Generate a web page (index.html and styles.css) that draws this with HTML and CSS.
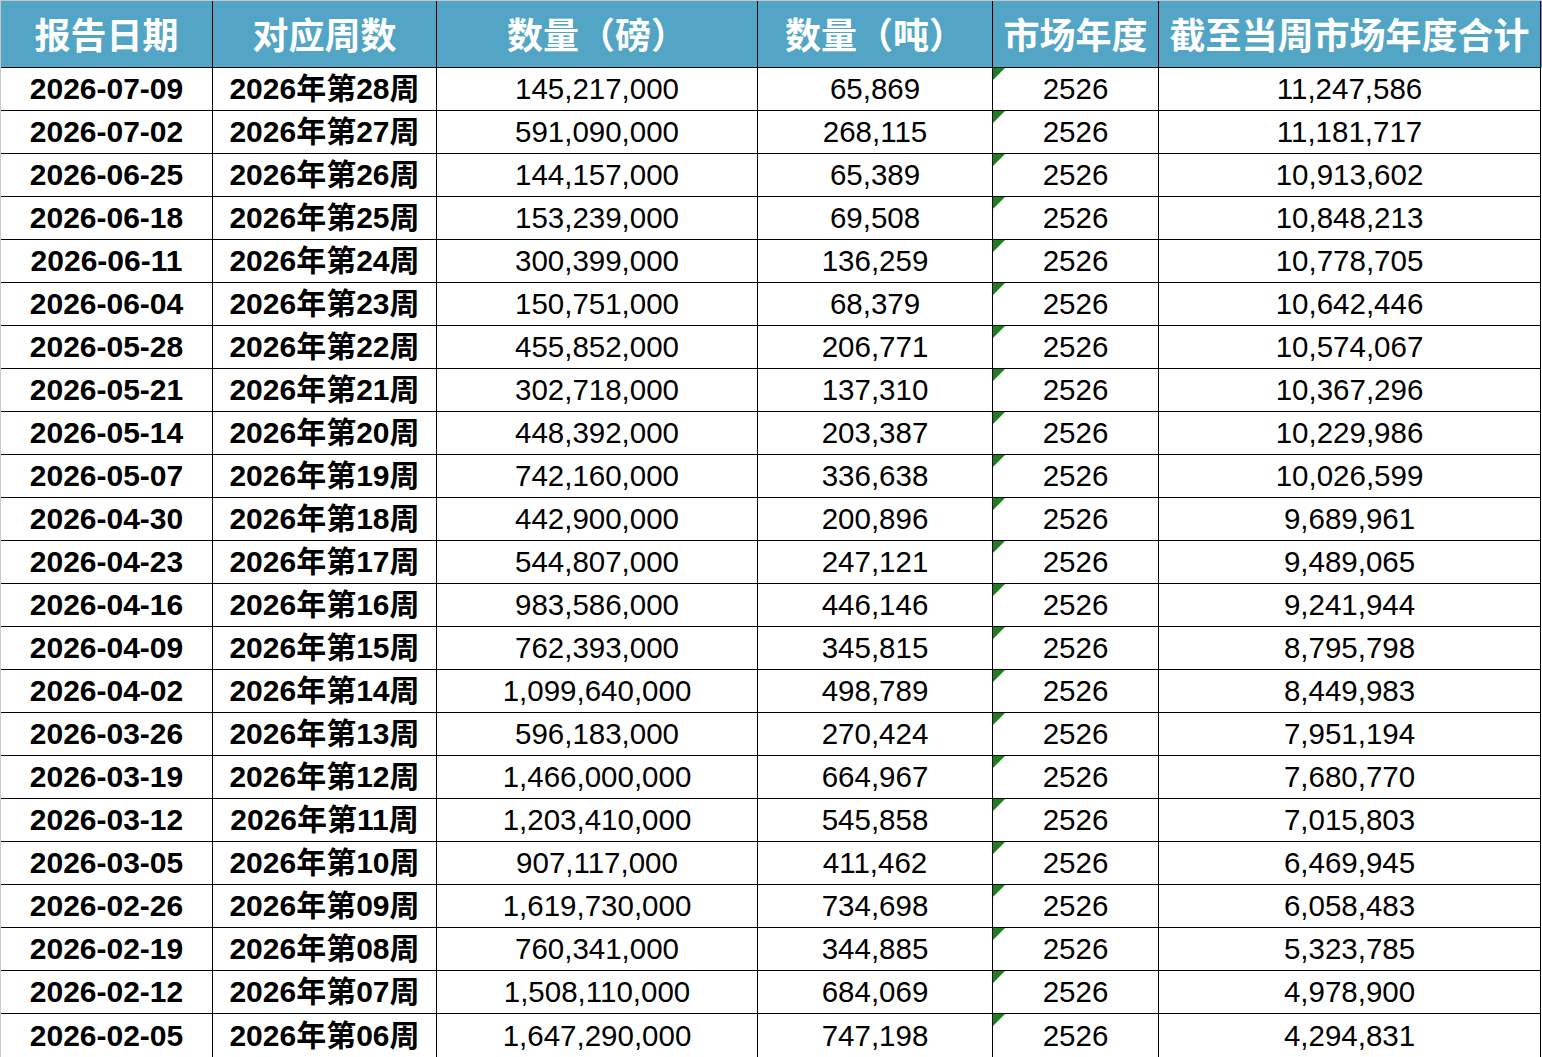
FILE: index.html
```html
<!DOCTYPE html>
<html lang="zh-CN">
<head>
<meta charset="utf-8">
<title>周度数据</title>
<link rel="stylesheet" href="styles.css">
</head>
<body>
<div class="sheet">
  <div class="row head">
    <div class="cell">报告日期</div>
    <div class="cell">对应周数</div>
    <div class="cell">数量（磅）</div>
    <div class="cell">数量（吨）</div>
    <div class="cell">市场年度</div>
    <div class="cell">截至当周市场年度合计</div>
  </div>
  <div class="row"><div class="cell b">2026-07-09</div><div class="cell b">2026年第28周</div><div class="cell">145,217,000</div><div class="cell">65,869</div><div class="cell flag">2526</div><div class="cell">11,247,586</div></div>
  <div class="row"><div class="cell b">2026-07-02</div><div class="cell b">2026年第27周</div><div class="cell">591,090,000</div><div class="cell">268,115</div><div class="cell flag">2526</div><div class="cell">11,181,717</div></div>
  <div class="row"><div class="cell b">2026-06-25</div><div class="cell b">2026年第26周</div><div class="cell">144,157,000</div><div class="cell">65,389</div><div class="cell flag">2526</div><div class="cell">10,913,602</div></div>
  <div class="row"><div class="cell b">2026-06-18</div><div class="cell b">2026年第25周</div><div class="cell">153,239,000</div><div class="cell">69,508</div><div class="cell flag">2526</div><div class="cell">10,848,213</div></div>
  <div class="row"><div class="cell b">2026-06-11</div><div class="cell b">2026年第24周</div><div class="cell">300,399,000</div><div class="cell">136,259</div><div class="cell flag">2526</div><div class="cell">10,778,705</div></div>
  <div class="row"><div class="cell b">2026-06-04</div><div class="cell b">2026年第23周</div><div class="cell">150,751,000</div><div class="cell">68,379</div><div class="cell flag">2526</div><div class="cell">10,642,446</div></div>
  <div class="row"><div class="cell b">2026-05-28</div><div class="cell b">2026年第22周</div><div class="cell">455,852,000</div><div class="cell">206,771</div><div class="cell flag">2526</div><div class="cell">10,574,067</div></div>
  <div class="row"><div class="cell b">2026-05-21</div><div class="cell b">2026年第21周</div><div class="cell">302,718,000</div><div class="cell">137,310</div><div class="cell flag">2526</div><div class="cell">10,367,296</div></div>
  <div class="row"><div class="cell b">2026-05-14</div><div class="cell b">2026年第20周</div><div class="cell">448,392,000</div><div class="cell">203,387</div><div class="cell flag">2526</div><div class="cell">10,229,986</div></div>
  <div class="row"><div class="cell b">2026-05-07</div><div class="cell b">2026年第19周</div><div class="cell">742,160,000</div><div class="cell">336,638</div><div class="cell flag">2526</div><div class="cell">10,026,599</div></div>
  <div class="row"><div class="cell b">2026-04-30</div><div class="cell b">2026年第18周</div><div class="cell">442,900,000</div><div class="cell">200,896</div><div class="cell flag">2526</div><div class="cell">9,689,961</div></div>
  <div class="row"><div class="cell b">2026-04-23</div><div class="cell b">2026年第17周</div><div class="cell">544,807,000</div><div class="cell">247,121</div><div class="cell flag">2526</div><div class="cell">9,489,065</div></div>
  <div class="row"><div class="cell b">2026-04-16</div><div class="cell b">2026年第16周</div><div class="cell">983,586,000</div><div class="cell">446,146</div><div class="cell flag">2526</div><div class="cell">9,241,944</div></div>
  <div class="row"><div class="cell b">2026-04-09</div><div class="cell b">2026年第15周</div><div class="cell">762,393,000</div><div class="cell">345,815</div><div class="cell flag">2526</div><div class="cell">8,795,798</div></div>
  <div class="row"><div class="cell b">2026-04-02</div><div class="cell b">2026年第14周</div><div class="cell">1,099,640,000</div><div class="cell">498,789</div><div class="cell flag">2526</div><div class="cell">8,449,983</div></div>
  <div class="row"><div class="cell b">2026-03-26</div><div class="cell b">2026年第13周</div><div class="cell">596,183,000</div><div class="cell">270,424</div><div class="cell flag">2526</div><div class="cell">7,951,194</div></div>
  <div class="row"><div class="cell b">2026-03-19</div><div class="cell b">2026年第12周</div><div class="cell">1,466,000,000</div><div class="cell">664,967</div><div class="cell flag">2526</div><div class="cell">7,680,770</div></div>
  <div class="row"><div class="cell b">2026-03-12</div><div class="cell b">2026年第11周</div><div class="cell">1,203,410,000</div><div class="cell">545,858</div><div class="cell flag">2526</div><div class="cell">7,015,803</div></div>
  <div class="row"><div class="cell b">2026-03-05</div><div class="cell b">2026年第10周</div><div class="cell">907,117,000</div><div class="cell">411,462</div><div class="cell flag">2526</div><div class="cell">6,469,945</div></div>
  <div class="row"><div class="cell b">2026-02-26</div><div class="cell b">2026年第09周</div><div class="cell">1,619,730,000</div><div class="cell">734,698</div><div class="cell flag">2526</div><div class="cell">6,058,483</div></div>
  <div class="row"><div class="cell b">2026-02-19</div><div class="cell b">2026年第08周</div><div class="cell">760,341,000</div><div class="cell">344,885</div><div class="cell flag">2526</div><div class="cell">5,323,785</div></div>
  <div class="row"><div class="cell b">2026-02-12</div><div class="cell b">2026年第07周</div><div class="cell">1,508,110,000</div><div class="cell">684,069</div><div class="cell flag">2526</div><div class="cell">4,978,900</div></div>
  <div class="row last"><div class="cell b">2026-02-05</div><div class="cell b">2026年第06周</div><div class="cell">1,647,290,000</div><div class="cell">747,198</div><div class="cell flag">2526</div><div class="cell">4,294,831</div></div>
</div>
</body>
</html>
```

FILE: styles.css
```css
* { box-sizing: border-box; }

html, body {
  margin: 0;
  padding: 0;
  background: #ffffff;
}

body {
  width: 1542px;
  height: 1057px;
  overflow: hidden;
  font-family: "Liberation Sans", Arial, "Noto Sans CJK SC", sans-serif;
  color: #000000;
}

.sheet {
  width: 1542px;
  border-top: 1px solid #c8c8c8;
  border-left: 1px solid #c8c8c8;
}

.row {
  display: grid;
  grid-template-columns: 212px 224px 321px 235px 166px 382px;
  height: 43px;
}

.row.head {
  height: 67px;
  background: #53a5c5;
}

.cell {
  position: relative;
  display: flex;
  align-items: center;
  justify-content: center;
  border-right: 1px solid #000000;
  border-bottom: 1px solid #000000;
  font-size: 29.5px;
  line-height: 1;
  white-space: nowrap;
}

.row.last .cell {
  border-bottom: none;
}

.head .cell {
  color: #ffffff;
  font-family: "Noto Sans CJK SC", sans-serif;
  font-weight: 700;
  font-size: 36px;
  padding-bottom: 2px;
}

.cell.b {
  font-weight: 700;
  font-size: 30px;
}

.cell.flag::before {
  content: "";
  position: absolute;
  top: 0;
  left: 0;
  width: 0;
  height: 0;
  border-top: 12px solid #1e7f1e;
  border-right: 12px solid transparent;
}
```
